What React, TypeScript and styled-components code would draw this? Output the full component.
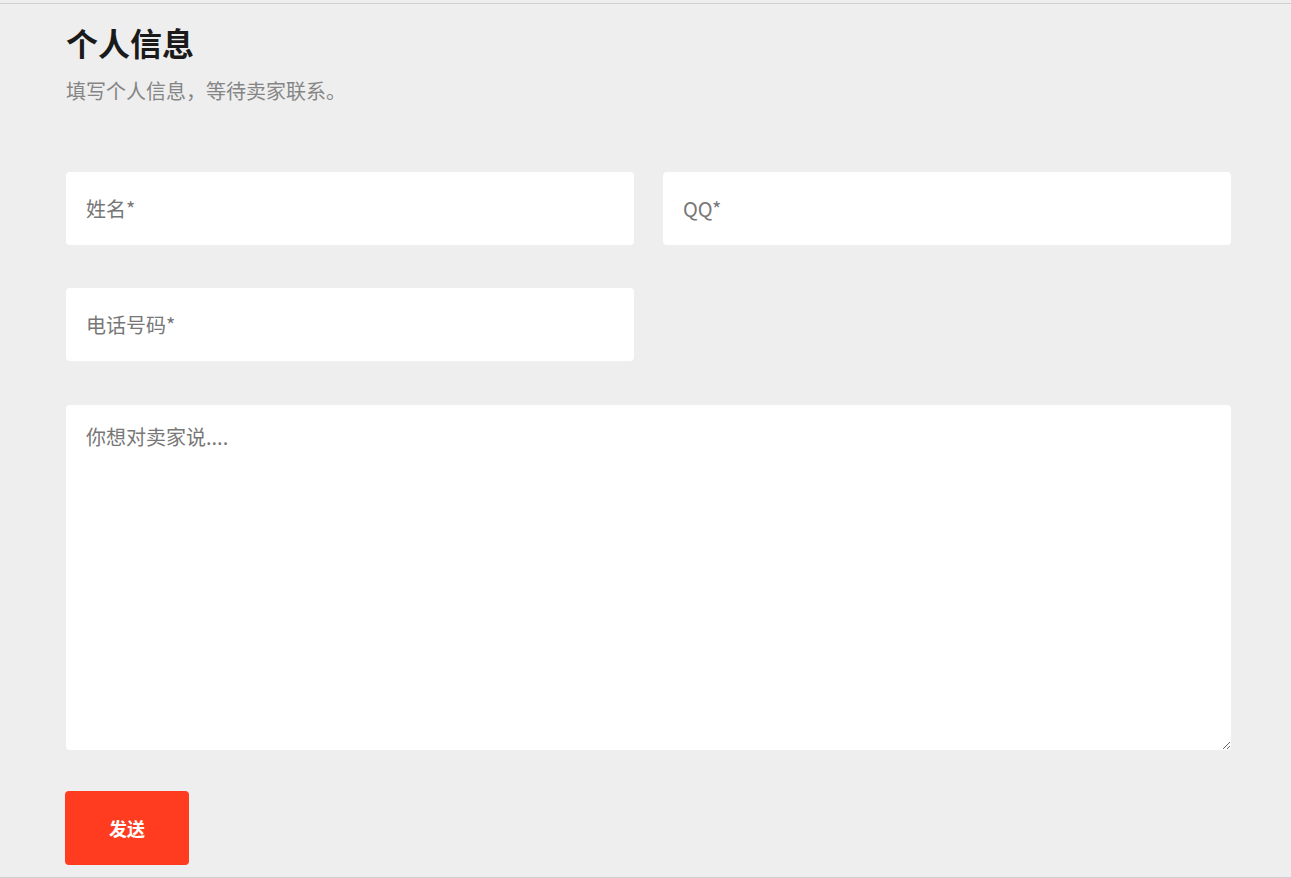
import styled, { createGlobalStyle } from "styled-components";

const GlobalStyle = createGlobalStyle`
  html, body {
    margin: 0;
    padding: 0;
    background: #eeeeee;
  }
  body {
    font-family: "Noto Sans CJK SC", "Noto Sans", Roboto, sans-serif;
  }
  * {
    box-sizing: border-box;
  }
`;

export default function App() {
  return (
    <>
      <GlobalStyle />
      <Page>
        <Section>
          <Title>个人信息</Title>
          <Subtitle>填写个人信息，等待卖家联系。</Subtitle>
          <Form onSubmit={e => e.preventDefault()}>
            <Field type="text" placeholder="姓名*" />
            <Field type="text" placeholder="QQ*" />
            <Field type="tel" placeholder="电话号码*" />
            <Message placeholder="你想对卖家说...." />
            <SendButton type="submit">发送</SendButton>
          </Form>
        </Section>
      </Page>
    </>
  );
}

const Page = styled.div`
  padding-top: 3px;
  background: #eeeeee;
`;

const Section = styled.section`
  height: 875px;
  padding: 19px 60px 0 66px;
  border-top: 1px solid #cfcfd3;
  border-bottom: 1px solid #cfcfd3;
`;

const Title = styled.h1`
  margin: 0;
  font-size: 32px;
  line-height: 38px;
  font-weight: 700;
  color: #1a1a1a;
`;

const Subtitle = styled.p`
  margin: 15px 0 0;
  font-size: 20px;
  line-height: 30px;
  color: #858585;
`;

const Form = styled.form`
  display: grid;
  grid-template-columns: 1fr 1fr;
  column-gap: 29px;
  row-gap: 43px;
  margin-top: 66px;
`;

const Field = styled.input`
  height: 73px;
  padding: 0 20px;
  border: none;
  border-radius: 4px;
  background: #ffffff;
  font-family: "Noto Sans CJK SC", Roboto, sans-serif;
  font-size: 20px;
  color: #333;
  outline: none;

  &::placeholder {
    color: #777777;
  }
`;

const Message = styled.textarea`
  grid-column: 1 / -1;
  height: 345px;
  margin-top: 1px;
  padding: 17px 20px;
  border: none;
  border-radius: 4px;
  background: #ffffff;
  font-family: "Noto Sans CJK SC", Roboto, sans-serif;
  font-size: 20px;
  line-height: 30px;
  color: #333;
  outline: none;

  &::placeholder {
    color: #777777;
  }
`;

const SendButton = styled.button`
  grid-column: 1;
  justify-self: start;
  width: 124px;
  height: 74px;
  margin: -2px 0 0 -1px;
  border: none;
  border-radius: 4px;
  background: #ff3c1f;
  color: #ffffff;
  font-family: "Noto Sans CJK SC", sans-serif;
  font-size: 18px;
  font-weight: 700;
  cursor: pointer;
`;
